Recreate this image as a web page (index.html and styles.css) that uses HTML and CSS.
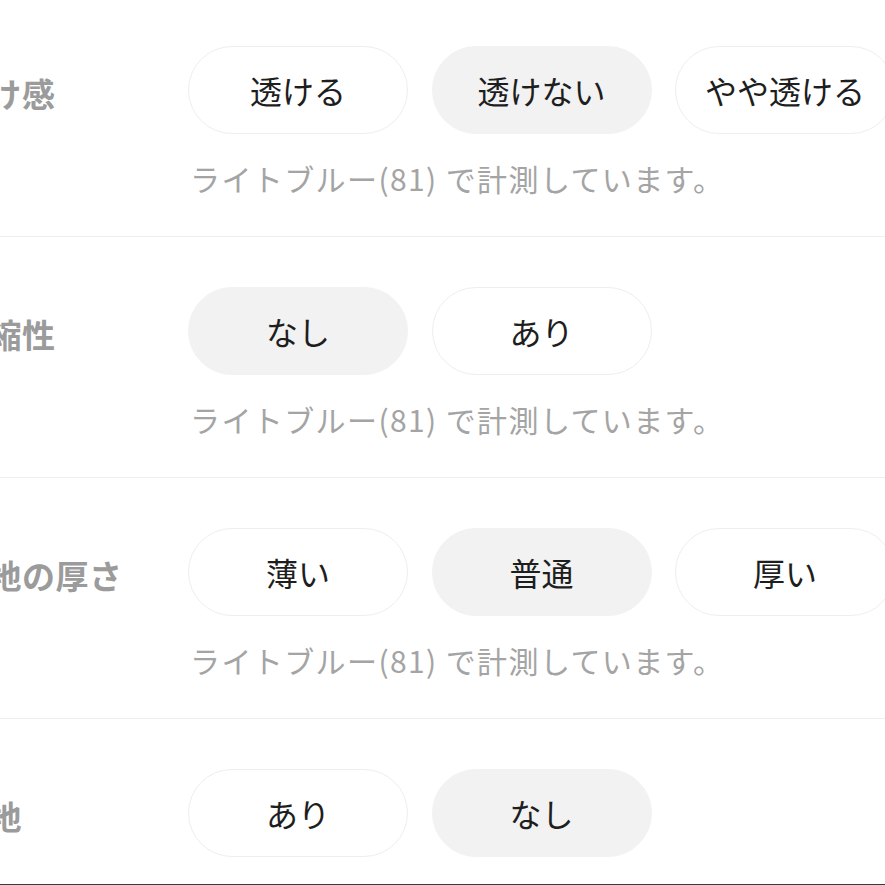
FILE: index.html
```html
<!DOCTYPE html>
<html lang="ja">
<head>
<meta charset="utf-8">
<title>サイズ・素材</title>
<link rel="stylesheet" href="styles.css">
</head>
<body>
<div class="spec">
  <div class="row">
    <div class="label">透け感</div>
    <div class="body">
      <div class="pills">
        <div class="pill">透ける</div>
        <div class="pill sel">透けない</div>
        <div class="pill">やや透ける</div>
      </div>
      <div class="note">ライトブルー(81) で計測しています。</div>
    </div>
  </div>
  <div class="row">
    <div class="label">伸縮性</div>
    <div class="body">
      <div class="pills">
        <div class="pill sel">なし</div>
        <div class="pill">あり</div>
      </div>
      <div class="note">ライトブルー(81) で計測しています。</div>
    </div>
  </div>
  <div class="row">
    <div class="label">生地の厚さ</div>
    <div class="body">
      <div class="pills">
        <div class="pill">薄い</div>
        <div class="pill sel">普通</div>
        <div class="pill">厚い</div>
      </div>
      <div class="note">ライトブルー(81) で計測しています。</div>
    </div>
  </div>
  <div class="row last">
    <div class="label">裏地</div>
    <div class="body">
      <div class="pills">
        <div class="pill">あり</div>
        <div class="pill sel">なし</div>
      </div>
    </div>
  </div>
</div>
<div class="footer"></div>
</body>
</html>
```
FILE: styles.css
```css
html, body {
  margin: 0;
  padding: 0;
  background: #ffffff;
  overflow: hidden;
  height: 885px;
}
body {
  font-family: "Noto Sans CJK JP", "Noto Sans", sans-serif;
  color: #222222;
  position: relative;
}
.spec {
  margin: -4px 0 0 -45px;
  width: 1000px;
}
.row {
  display: grid;
  grid-template-columns: 233px 1fr;
  padding: 50px 0 38px;
  border-bottom: 1px solid #eeeeee;
}
.row.last {
  border-bottom: none;
  padding-bottom: 0;
  height: 113px;
}
.label {
  font-size: 33px;
  font-weight: 700;
  color: #9b9b9b;
  line-height: 88px;
  margin-top: 3px;
  letter-spacing: 0.5px;
  white-space: nowrap;
}
.pills {
  display: flex;
  gap: 23.5px;
}
.pill {
  flex: 0 0 auto;
  box-sizing: border-box;
  width: 220px;
  height: 88px;
  border-radius: 44px;
  border: 1.5px solid #eeeeee;
  background: #ffffff;
  display: flex;
  align-items: center;
  justify-content: center;
  font-size: 32px;
  color: #1e1e1e;
  white-space: nowrap;
}
.pill.sel {
  background: #f2f2f2;
  border-color: #f2f2f2;
}
.note {
  margin-top: 24px;
  line-height: 40px;
  font-size: 30px;
  letter-spacing: 1.4px;
  color: #a4a4a4;
  padding-left: 2px;
  white-space: nowrap;
}
.footer {
  position: absolute;
  left: 0;
  right: 0;
  top: 884px;
  height: 4px;
  background: #3a3a3a;
}
```
